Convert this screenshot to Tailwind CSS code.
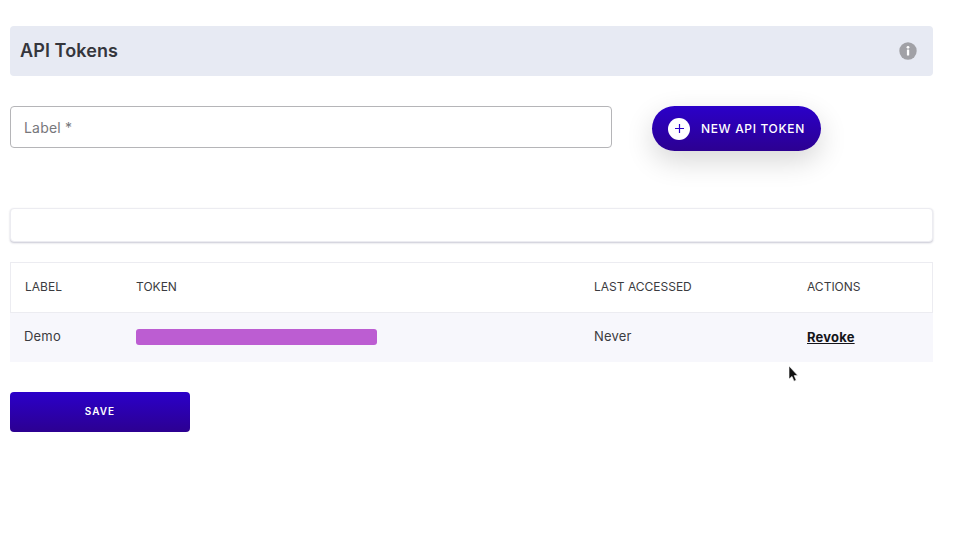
<!DOCTYPE html>
<html>
<head>
<meta charset="utf-8">
<script src="https://cdn.jsdelivr.net/npm/@tailwindcss/browser@4"></script>
</head>
<body class="relative bg-white h-[533px] w-[968px] overflow-hidden font-['Inter',sans-serif]">
<main class="w-[923px] ml-[10px] pt-[26px] flex flex-col">
  <header class="h-[50px] bg-[#e7eaf3] rounded-[4px] flex items-center justify-between pl-[10px] pr-[16px]">
    <h1 class="text-[18px] font-semibold text-[#35363c] leading-none -mt-[1px] tracking-[0.1px]">API Tokens</h1>
    <svg class="w-[18px] h-[18px]" viewBox="0 0 18 18"><circle cx="9" cy="9" r="8.7" fill="#a1a1a6"/><rect x="7.9" y="7.6" width="2.3" height="6" rx="0.5" fill="#fff"/><circle cx="9" cy="5.3" r="1.4" fill="#fff"/></svg>
  </header>
  <section class="mt-[30px] flex items-start">
    <div class="w-[602px] h-[42px] border border-[#b5b5b8] rounded-[4px] flex items-center pl-[13px] text-[14px] text-[#77777b] tracking-[0.2px]">Label *</div>
    <button class="ml-[40px] w-[169px] h-[45px] rounded-full bg-linear-to-b/srgb from-[#2b00c9] to-[#2c0091] shadow-[0_10px_28px_rgba(0,0,0,0.16)] flex items-center pl-[16px] text-white">
      <span class="w-[22px] h-[22px] rounded-full bg-white flex items-center justify-center">
        <svg class="w-[11px] h-[11px]" viewBox="0 0 11 11"><path d="M5.5 1v9M1 5.5h9" stroke="#2b00c9" stroke-width="1.2"/></svg>
      </span>
      <span class="ml-[11px] text-[12px] font-medium tracking-[0.65px] whitespace-nowrap">NEW API TOKEN</span>
    </button>
  </section>
  <div class="mt-[57px] h-[34px] bg-white border border-[#ececf1] rounded-[4px] shadow-[0_1px_2px_rgba(70,70,110,0.3)]"></div>
  <div class="mt-[20px] w-[923px] text-[#3b3b40]">
    <div class="h-[51px] pb-[2px] border border-[#ececf1] grid grid-cols-[125px_458px_213px_125px] items-center text-[12px]">
      <div class="pl-[14px]">LABEL</div>
      <div>TOKEN</div>
      <div>LAST ACCESSED</div>
      <div>ACTIONS</div>
    </div>
    <div class="h-[49px] pb-[2px] bg-[#f7f7fc] grid grid-cols-[126px_458px_213px_126px] items-center text-[13px] tracking-[0.2px]">
      <div class="pl-[14px]">Demo</div>
      <div class="w-[241px] h-[16px] rounded-[3px] bg-[#bc5dd2]"></div>
      <div>Never</div>
      <div class="font-bold text-[#15151a] underline mt-[2px]">Revoke</div>
    </div>
  </div>
  <button class="mt-[30px] w-[180px] h-[40px] pb-[2px] rounded-[4px] bg-linear-to-b/srgb from-[#2b00c9] to-[#2c0091] text-white text-[10px] font-semibold tracking-[1px]">SAVE</button>
</main>
<svg class="absolute left-[788px] top-[365px] w-[11px] h-[18px]" viewBox="0 0 11 18"><path d="M1 1v13l3-2.6 2 4.8 2.2-1-2-4.6h3.6z" fill="#111" stroke="#fff" stroke-width="0.6"/></svg>
</body>
</html>
